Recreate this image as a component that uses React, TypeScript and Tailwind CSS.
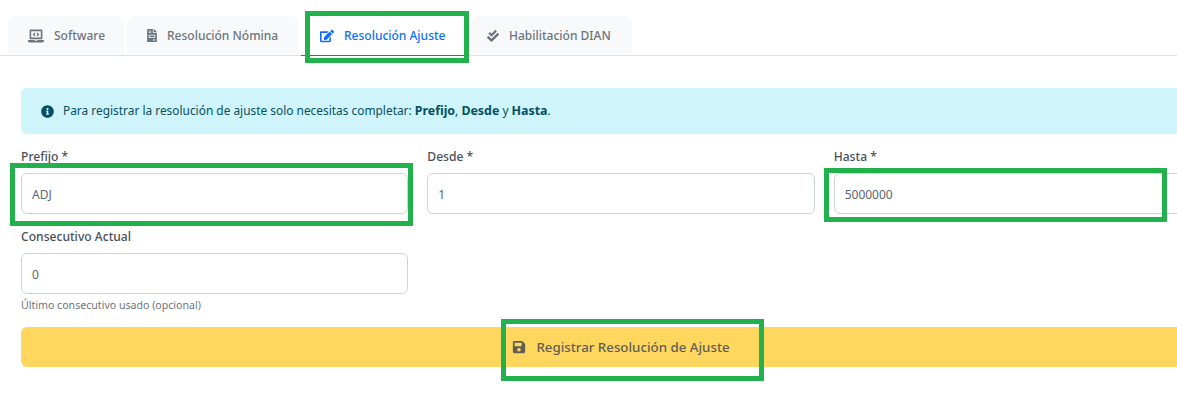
import React from "react";
import {
  FaLaptopCode,
  FaFileInvoice,
  FaEdit,
  FaCheckDouble,
  FaInfoCircle,
  FaSave,
} from "react-icons/fa";

const Tab = ({
  icon,
  label,
  active,
  className,
}: {
  icon: React.ReactNode;
  label: string;
  active?: boolean;
  className: string;
}) => (
  <div
    className={`-mb-px flex h-10 items-center gap-[10px] rounded-t-lg border-b text-[12px] font-medium ${className} ${
      active
        ? "border-b-[#0d6efd] bg-white text-[#0d6efd]"
        : "border-b-[#dee2e6] bg-[#f8f9fa] text-[#6c757d]"
    }`}
  >
    {icon}
    <span className="pt-px">{label}</span>
  </div>
);

const Field = ({
  label,
  value,
  hint,
}: {
  label: string;
  value: string;
  hint?: string;
}) => (
  <div className="flex flex-col">
    <label className="mb-[7px] h-[18px] text-[12.1px] leading-[18px] font-medium text-[#495057]">
      {label}
    </label>
    <div className="flex h-[41px] items-center rounded-md border border-[#ced4da] bg-white px-[10px] text-[12px] text-[#5a6570]">
      <span className="pt-[2px]">{value}</span>
    </div>
    {hint && (
      <span className="mt-1 text-[10.6px] leading-[15px] text-[#6c757d]">
        {hint}
      </span>
    )}
  </div>
);

const App = () => {
  return (
    <div className="relative h-[403px] w-[1177px] overflow-hidden bg-white font-['Noto_Sans',sans-serif]">
      <div className="w-[1242px]">
        <div className="flex border-b border-[#dee2e6] pt-4 pl-2">
          <Tab
            className="mr-[3px] w-[116px] pl-5"
            icon={<FaLaptopCode className="text-[16px]" />}
            label="Software"
          />
          <Tab
            className="mr-[3px] w-[171px] pl-5"
            icon={<FaFileInvoice className="h-[13px] w-[10px]" />}
            label="Resolución Nómina"
          />
          <Tab
            active
            className="mr-[3px] w-[167px] pl-[19px]"
            icon={<FaEdit className="text-[14px]" />}
            label="Resolución Ajuste"
          />
          <Tab
            className="w-[161px] pl-4"
            icon={<FaCheckDouble className="text-[12px]" />}
            label="Habilitación DIAN"
          />
        </div>

        <div className="px-[21px] pt-8">
          <div className="flex h-[46px] items-center gap-[9px] rounded-md bg-[#cff4fc] px-5 text-[11.9px] text-[#055160]">
            <FaInfoCircle className="text-[13px]" />
            <span>
              Para registrar la resolución de ajuste solo necesitas completar:{" "}
              <b className="text-[12.4px]">Prefijo</b>,{" "}
              <b className="text-[12.4px]">Desde</b> y{" "}
              <b className="text-[12.4px]">Hasta</b>.
            </span>
          </div>

          <div className="mt-[14px] grid grid-cols-3 gap-x-[19px] gap-y-[14px]">
            <Field label="Prefijo *" value="ADJ" />
            <Field label="Desde *" value="1" />
            <Field label="Hasta *" value="5000000" />
            <Field
              label="Consecutivo Actual"
              value="0"
              hint="Último consecutivo usado (opcional)"
            />
          </div>

          <div className="mt-[14px] flex h-10 items-center justify-center gap-[10px] rounded-md bg-[#ffd75f] text-[13.3px] font-medium text-[#5f5f56]">
            <FaSave className="text-[14px]" />
            <span className="pt-[2px]">Registrar Resolución de Ajuste</span>
          </div>
        </div>
      </div>

      {/* green marks drawn over the screenshot */}
      <div className="absolute top-[11px] left-[305px] h-[52px] w-[164px] border-[5px] border-[#22b14c]" />
      <div className="absolute top-[163px] left-[10px] h-[63px] w-[403px] border-[5px] border-[#22b14c]" />
      <div className="absolute top-[168px] left-[824px] h-[54px] w-[343px] border-[5px] border-[#22b14c]" />
      <div className="absolute top-[319px] left-[501px] h-[62px] w-[263px] border-[5px] border-[#22b14c]" />
    </div>
  );
};

export default App;
